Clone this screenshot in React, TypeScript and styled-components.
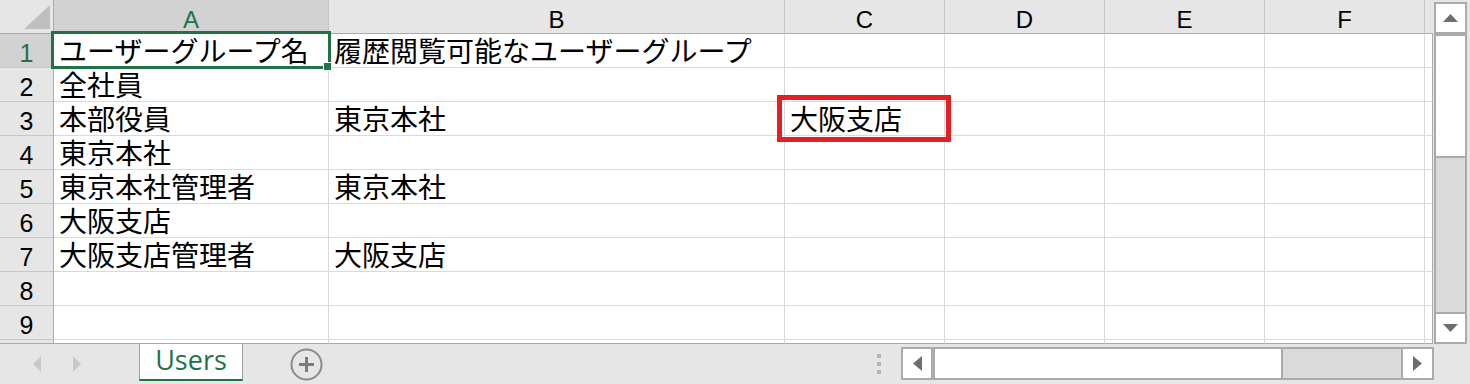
import { Fragment } from "react";
import styled, { createGlobalStyle } from "styled-components";

const GlobalStyle = createGlobalStyle`
    html, body {
        margin: 0;
        padding: 0;
        background: #e6e6e6;
        overflow: hidden;
    }
`

const GREEN = "#217346"

const Window = styled.div`
    width: 1470px;
    height: 384px;
    display: flex;
    flex-direction: column;
    background: #e6e6e6;
    overflow: hidden;
`

const Main = styled.div`
    display: flex;
    height: 344px;
`

const Sheet = styled.div`
    position: relative;
    width: 1433px;
    display: grid;
    grid-template-columns: 54px 275px 456px 160px 160px 160px 160px 8px;
    grid-template-rows: repeat(10, 34px) 4px;
    background: #fff;
`

const Corner = styled.div`
    box-sizing: border-box;
    background: #e6e6e6;
    border-right: 1px solid #ababab;
    border-bottom: 1px solid #ababab;
`

const ColHead = styled.div<{ $active?: boolean; $edge?: boolean }>`
    box-sizing: border-box;
    background: ${p => p.$active ? "#d2d2d2" : "#e6e6e6"};
    color: ${p => p.$active ? GREEN : "#000"};
    border-right: ${p => p.$edge ? "none" : "1px solid #c6c6c6"};
    border-bottom: 1px solid #ababab;
    padding-top: 6px;
    font: 24px/27px "Liberation Sans", Arial, sans-serif;
    text-align: center;
`

const RowHead = styled.div<{ $active?: boolean }>`
    box-sizing: border-box;
    background: ${p => p.$active ? "#d2d2d2" : "#e6e6e6"};
    color: ${p => p.$active ? GREEN : "#000"};
    border-right: 1px solid #ababab;
    border-bottom: 1px solid #c6c6c6;
    padding-top: 6px;
    font: 25px/27px "Liberation Sans", Arial, sans-serif;
    text-align: center;
    overflow: hidden;
`

const Cell = styled.div<{ $edge?: boolean; $stub?: boolean }>`
    box-sizing: border-box;
    border-right: 1px solid ${p => p.$edge ? "#ababab" : "#d9d9d9"};
    border-bottom: 1px solid ${p => p.$stub ? "#ababab" : "#d9d9d9"};
    padding-left: ${p => p.$edge ? "0" : "5px"};
    font: 28px/33px "Noto Sans CJK JP", "Noto Sans CJK SC", sans-serif;
    color: #000;
    white-space: nowrap;
    overflow: ${p => p.$edge ? "hidden" : "visible"};
`

const StubHead = styled.div`
    box-sizing: border-box;
    background: #e6e6e6;
    border-right: 1px solid #ababab;
    border-bottom: 1px solid #ababab;
`

const Selection = styled.div`
    position: absolute;
    left: 51px;
    top: 31px;
    width: 280px;
    height: 38px;
    box-sizing: border-box;
    border: 3px solid ${GREEN};
    pointer-events: none;
`

const FillHandle = styled.div`
    position: absolute;
    right: -4px;
    bottom: -5px;
    width: 7px;
    height: 7px;
    background: ${GREEN};
    border: 1px solid #fff;
`

const Callout = styled.div`
    position: absolute;
    left: 777px;
    top: 95px;
    width: 174px;
    height: 47px;
    box-sizing: border-box;
    border: 5px solid #e51e25;
    pointer-events: none;
`

const VScroll = styled.div`
    margin-left: 1px;
    margin-top: 2px;
    width: 33px;
    height: 342px;
    box-sizing: border-box;
    border: 2px solid #ababab;
    background: #dadada;
    display: flex;
    flex-direction: column;
`

const VButton = styled.div<{ $end?: boolean }>`
    flex: none;
    height: 30px;
    box-sizing: border-box;
    background: #fff;
    display: flex;
    align-items: center;
    justify-content: center;
    ${p => p.$end
        ? "margin-top: auto; border-top: 2px solid #ababab;"
        : "border-bottom: 2px solid #ababab;"}
`

const VThumb = styled.div`
    flex: none;
    height: 124px;
    box-sizing: border-box;
    background: #fff;
    border-top: 2px solid #ababab;
    border-bottom: 2px solid #ababab;
`

const TabBar = styled.div`
    display: flex;
    height: 40px;
    align-items: flex-start;
`

const TabNav = styled.div`
    width: 139px;
    height: 40px;
    box-sizing: border-box;
    padding-left: 33px;
    display: flex;
    align-items: center;
    gap: 32px;
`

const SheetTab = styled.div`
    width: 104px;
    height: 37px;
    box-sizing: border-box;
    background: #fff;
    border-left: 1px solid #a0a0a0;
    border-right: 1px solid #a0a0a0;
    border-bottom: 2px solid ${GREEN};
    color: ${GREEN};
    font: 27px/31px "Open Sans", "Liberation Sans", sans-serif;
    text-align: center;
`

const AddSheet = styled.div`
    margin-left: 47px;
    align-self: center;
    width: 33px;
    height: 33px;
`

const Spacer = styled.div`
    flex: 1;
`

const SplitDots = styled.div`
    align-self: center;
    display: flex;
    flex-direction: column;
    gap: 4px;
    margin-right: 20px;
`

const Dot = styled.div`
    width: 4px;
    height: 4px;
    background: #b5b5b5;
`

const HScroll = styled.div`
    margin-top: 3px;
    margin-right: 36px;
    width: 533px;
    height: 33px;
    box-sizing: border-box;
    border: 2px solid #ababab;
    background: #dadada;
    display: flex;
`

const HButton = styled.div<{ $end?: boolean }>`
    flex: none;
    width: 30px;
    box-sizing: border-box;
    background: #fff;
    display: flex;
    align-items: center;
    justify-content: center;
    ${p => p.$end
        ? "margin-left: auto; width: 31px; border-left: 2px solid #ababab;"
        : "border-right: 2px solid #ababab;"}
`

const HThumb = styled.div`
    flex: none;
    width: 350px;
    box-sizing: border-box;
    background: #fff;
    border-left: 2px solid #ababab;
    border-right: 2px solid #ababab;
`

const columns = ["A", "B", "C", "D", "E", "F"]

const rows: string[][] = [
    ["ユーザーグループ名", "履歴閲覧可能なユーザーグループ"],
    ["全社員"],
    ["本部役員", "東京本社", "大阪支店"],
    ["東京本社"],
    ["東京本社管理者", "東京本社"],
    ["大阪支店"],
    ["大阪支店管理者", "大阪支店"],
    [],
    [],
]

const Arrow = ({ dir, color = "#6e6e6e" }: { dir: "up" | "down" | "left" | "right"; color?: string }) => {
    if (dir === "up") return <svg width="15" height="8"><polygon points="7.5,0 15,8 0,8" fill={color} /></svg>
    if (dir === "down") return <svg width="15" height="8"><polygon points="0,0 15,0 7.5,8" fill={color} /></svg>
    if (dir === "left") return <svg width="9" height="15"><polygon points="9,0 9,15 0,7.5" fill={color} /></svg>
    return <svg width="9" height="15"><polygon points="0,0 9,7.5 0,15" fill={color} /></svg>
}

export default function App() {
    return (
        <Window>
            <GlobalStyle />
            <Main>
                <Sheet>
                    <Corner>
                        <svg width="53" height="33">
                            <polygon points="24,29 50,29 50,5" fill="#bfbfbf" />
                        </svg>
                    </Corner>
                    {columns.map(c => <ColHead key={c} $active={c === "A"}>{c}</ColHead>)}
                    <ColHead $edge />
                    {rows.map((r, i) => (
                        <Fragment key={i}>
                            <RowHead $active={i === 0}>{i + 1}</RowHead>
                            {columns.map((c, j) => <Cell key={c}>{r[j] ?? ""}</Cell>)}
                            <Cell $edge />
                        </Fragment>
                    ))}
                    <StubHead />
                    {columns.map(c => <Cell key={c} $stub />)}
                    <Cell $edge $stub />
                    <Selection>
                        <FillHandle />
                    </Selection>
                    <Callout />
                </Sheet>
                <VScroll>
                    <VButton><Arrow dir="up" /></VButton>
                    <VThumb />
                    <VButton $end><Arrow dir="down" /></VButton>
                </VScroll>
            </Main>
            <TabBar>
                <TabNav>
                    <svg width="8" height="16"><polygon points="8,0 8,16 0,8" fill="#c8c8c8" /></svg>
                    <svg width="8" height="16"><polygon points="0,0 8,8 0,16" fill="#c8c8c8" /></svg>
                </TabNav>
                <SheetTab>Users</SheetTab>
                <AddSheet>
                    <svg width="33" height="33" viewBox="0 0 33 33">
                        <circle cx="16.5" cy="16.5" r="15" fill="none" stroke="#8a8a8a" strokeWidth="2" />
                        <rect x="9" y="15" width="15" height="3" fill="#7a7a7a" />
                        <rect x="15" y="9" width="3" height="15" fill="#7a7a7a" />
                    </svg>
                </AddSheet>
                <Spacer />
                <SplitDots>
                    <Dot />
                    <Dot />
                    <Dot />
                </SplitDots>
                <HScroll>
                    <HButton><Arrow dir="left" /></HButton>
                    <HThumb />
                    <HButton $end><Arrow dir="right" /></HButton>
                </HScroll>
            </TabBar>
        </Window>
    )
}
